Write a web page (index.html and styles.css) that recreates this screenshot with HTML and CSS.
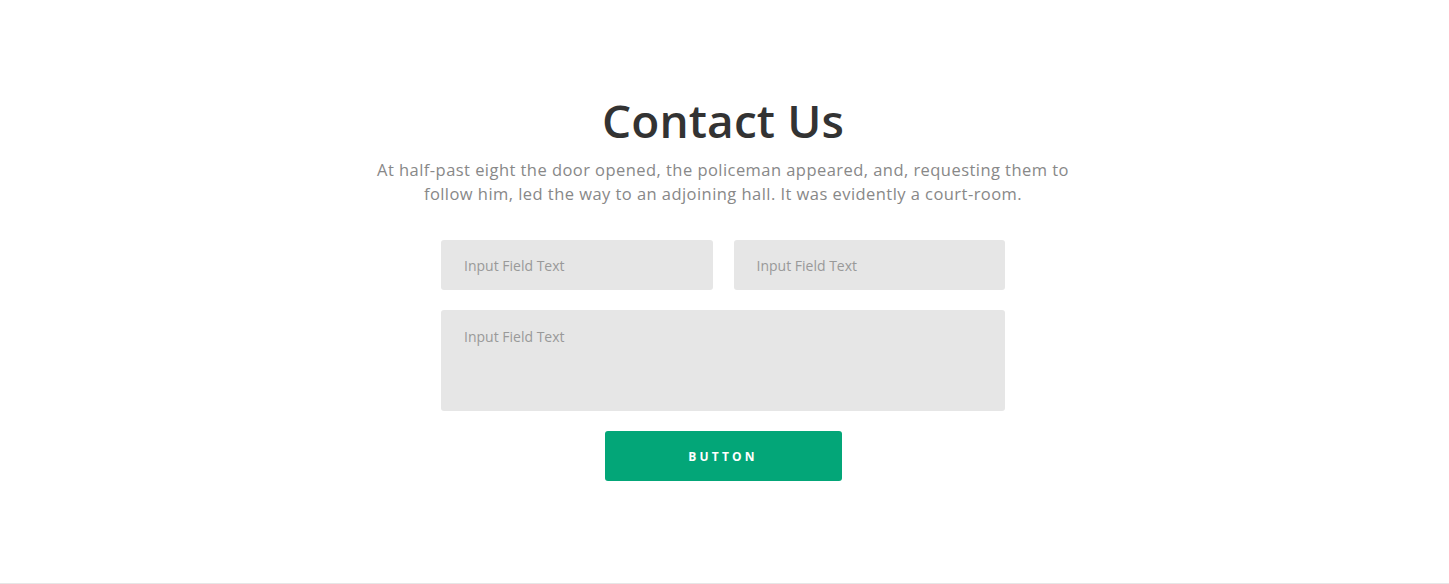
FILE: index.html
```html
<!DOCTYPE html>
<html lang="en">
<head>
<meta charset="utf-8">
<title>Contact Us</title>
<link rel="stylesheet" href="styles.css">
</head>
<body>
<section class="contact">
  <h1 class="contact__title">Contact Us</h1>
  <p class="contact__lead">At half-past eight the door opened, the policeman appeared, and, requesting them to follow him, led the way to an adjoining hall. It was evidently a court-room.</p>
  <form class="contact__form">
    <div class="contact__row">
      <input class="field" type="text" placeholder="Input Field Text">
      <input class="field" type="text" placeholder="Input Field Text">
    </div>
    <textarea class="field field--area" placeholder="Input Field Text"></textarea>
    <button class="contact__btn" type="button">Button</button>
  </form>
</section>
</body>
</html>
```

FILE: styles.css
```css
* { box-sizing: border-box; }
html, body { margin: 0; padding: 0; background: #fff; }
body { font-family: "Open Sans", "Noto Sans", sans-serif; }

.contact {
  height: 584px;
  border-bottom: 1px solid #e6e6e6;
  display: flex;
  flex-direction: column;
  align-items: center;
  padding: 92px 3px 0 0;
}

.contact__title {
  margin: 0;
  font-size: 46px;
  line-height: 56px;
  font-weight: 600;
  color: #333;
  letter-spacing: 0.1px;
}

.contact__lead {
  margin: 10px 0 0;
  width: 700px;
  text-align: center;
  font-size: 16.5px;
  line-height: 24px;
  letter-spacing: 0.45px;
  color: #888;
}

.contact__form {
  margin-top: 34px;
  width: 564px;
  display: flex;
  flex-direction: column;
  align-items: center;
  gap: 20px;
}

.contact__row {
  width: 100%;
  display: flex;
  gap: 21px;
}

.field {
  flex: 1;
  width: 100%;
  height: 50px;
  border: 0;
  border-radius: 3px;
  background: #e6e6e6;
  padding: 0 23px;
  font-family: inherit;
  font-size: 14px;
  color: #333;
  outline: none;
}
.field::placeholder { color: #999; }

.field--area {
  flex: none;
  height: 101px;
  padding-top: 17px;
  resize: none;
  display: block;
  line-height: 20px;
}

.contact__btn {
  width: 237px;
  height: 50px;
  border: 0;
  border-radius: 3px;
  background: #03a678;
  color: #fff;
  font-family: inherit;
  font-size: 12px;
  font-weight: 700;
  letter-spacing: 3.2px;
  text-transform: uppercase;
  cursor: pointer;
}
```
